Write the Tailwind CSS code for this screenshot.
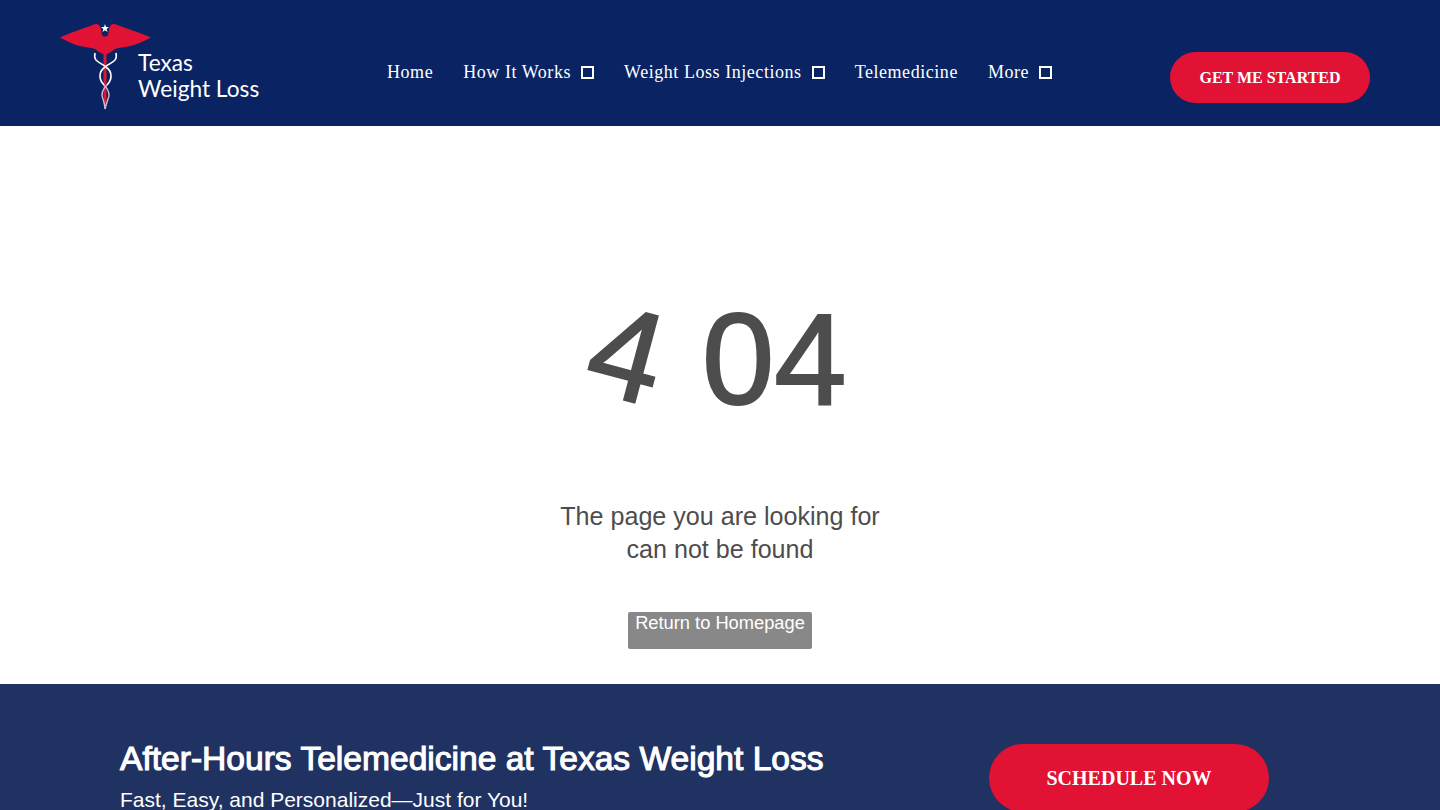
<!DOCTYPE html>
<html>
	<head>
		<meta charset="utf-8">
		<meta name="viewport" content="width=device-width, initial-scale=1">
		<title>Texas Weight Loss</title>
		<script src="https://cdn.jsdelivr.net/npm/@tailwindcss/browser@4"></script>
	</head>
	<body class="h-[810px] overflow-hidden bg-white font-['Liberation_Sans',sans-serif]">
		<header class="h-[126px] bg-[#0a2463] flex items-start text-white">
			<a class="w-[387px] pl-[60px] pt-[22px] flex items-start shrink-0">
				<svg width="92" height="90" viewBox="0 0 92 90" class="shrink-0">
					<path d="M45 25 L45 84" stroke="#e11233" stroke-width="3"/>
					<path d="M0 15.500 C10 11 24 6 34 2.500 C38 1 40.500 3 41 8 L42 13 C43 15 47 15 48 13 L49 8 C49.500 3 52 1 56 2.500 C66 6 80 11 91 15.500 C84 19 76 23 68 24.500 C62 25.500 58 26 55 27 C52 29 50 31 47 32 L43 32 C40 31 38 29 35 27 C32 26 28 25.500 22 24.500 C14 23 7 19 0 15.500 Z" fill="#e11233"/>
					<path d="M45 2 L46 5 L49 5 L46.600 7 L47.500 10 L45 8.200 L42.500 10 L43.400 7 L41 5 L44 5 Z" fill="#fff"/>
					<path d="M35 31 C33 40 40 40 46 45 C53 50 52 58 47 63" fill="none" stroke="#fff" stroke-width="1.600"/>
					<path d="M56 31 C58 40 51 40 45 45 C38 50 39 58 44 63" fill="none" stroke="#fff" stroke-width="1.600"/>
					<path d="M47 63 C42 68 41 73 43 77 C44 80 45 83 45 87" fill="none" stroke="#cdbcd2" stroke-width="1.400"/>
					<path d="M44 63 C49 68 50 73 48 77 C47 80 46 83 45 87" fill="none" stroke="#cdbcd2" stroke-width="1.400"/>
				</svg>
				<div class="ml-[-14px] mt-[28px] font-['Lato',sans-serif] text-[22.700px] leading-[26px]">
					<div>Texas</div>
					<div class="whitespace-nowrap">Weight Loss</div>
				</div>
			</a>
			<nav class="flex items-center gap-[30px] pt-[60px] font-['Liberation_Serif',serif] text-[18px] leading-[24px] tracking-[0.55px] whitespace-nowrap">
				<a>Home</a>
				<a class="flex items-center gap-[10px]">How It Works <span class="w-[13px] h-[13px] border-2 border-white"></span></a>
				<a class="flex items-center gap-[10px]">Weight Loss Injections <span class="w-[13px] h-[13px] border-2 border-white"></span></a>
				<a>Telemedicine</a>
				<a class="flex items-center gap-[10px]">More <span class="w-[13px] h-[13px] border-2 border-white"></span></a>
			</nav>
			<a class="ml-auto mr-[70px] mt-[52px] w-[200px] h-[51px] rounded-full bg-[#e11233] flex items-center justify-center font-['Liberation_Serif',serif] font-bold text-[16px]">GET ME STARTED</a>
		</header>
		<main class="h-[558px] flex flex-col items-center text-[#4d4d4d]">
			<h1 class="mt-[160px] text-[130px] leading-[146px] whitespace-nowrap [-webkit-text-stroke:2px_#4d4d4d]"><span class="inline-block rotate-[15deg] -translate-x-[2px] -translate-y-[5px]">4</span> 04</h1>
			<p class="mt-[68px] text-[25.100px] leading-[33px] text-center">The page you are looking for<br>can not be found</p>
			<a class="mt-[46px] w-[184px] h-[37px] bg-[#888888] rounded-[2px] text-white text-[18.300px] leading-[22px] text-center">Return to Homepage</a>
		</main>
		<footer class="h-[126px] bg-[#1f3262] text-white flex items-start">
			<div class="pl-[120px] pt-[56px] w-[989px] shrink-0">
				<h2 class="text-[33.600px] leading-[38px] whitespace-nowrap [-webkit-text-stroke:1.100px_#fff]">After-Hours Telemedicine at Texas Weight Loss</h2>
				<p class="mt-[9px] text-[21px] leading-[26px] whitespace-nowrap">Fast, Easy, and Personalized—Just for You!</p>
			</div>
			<a class="mt-[60px] w-[280px] h-[68px] rounded-full bg-[#e11233] flex items-center justify-center font-['Liberation_Serif',serif] font-bold text-[20px]">SCHEDULE NOW</a>
		</footer>
	</body>
</html>
